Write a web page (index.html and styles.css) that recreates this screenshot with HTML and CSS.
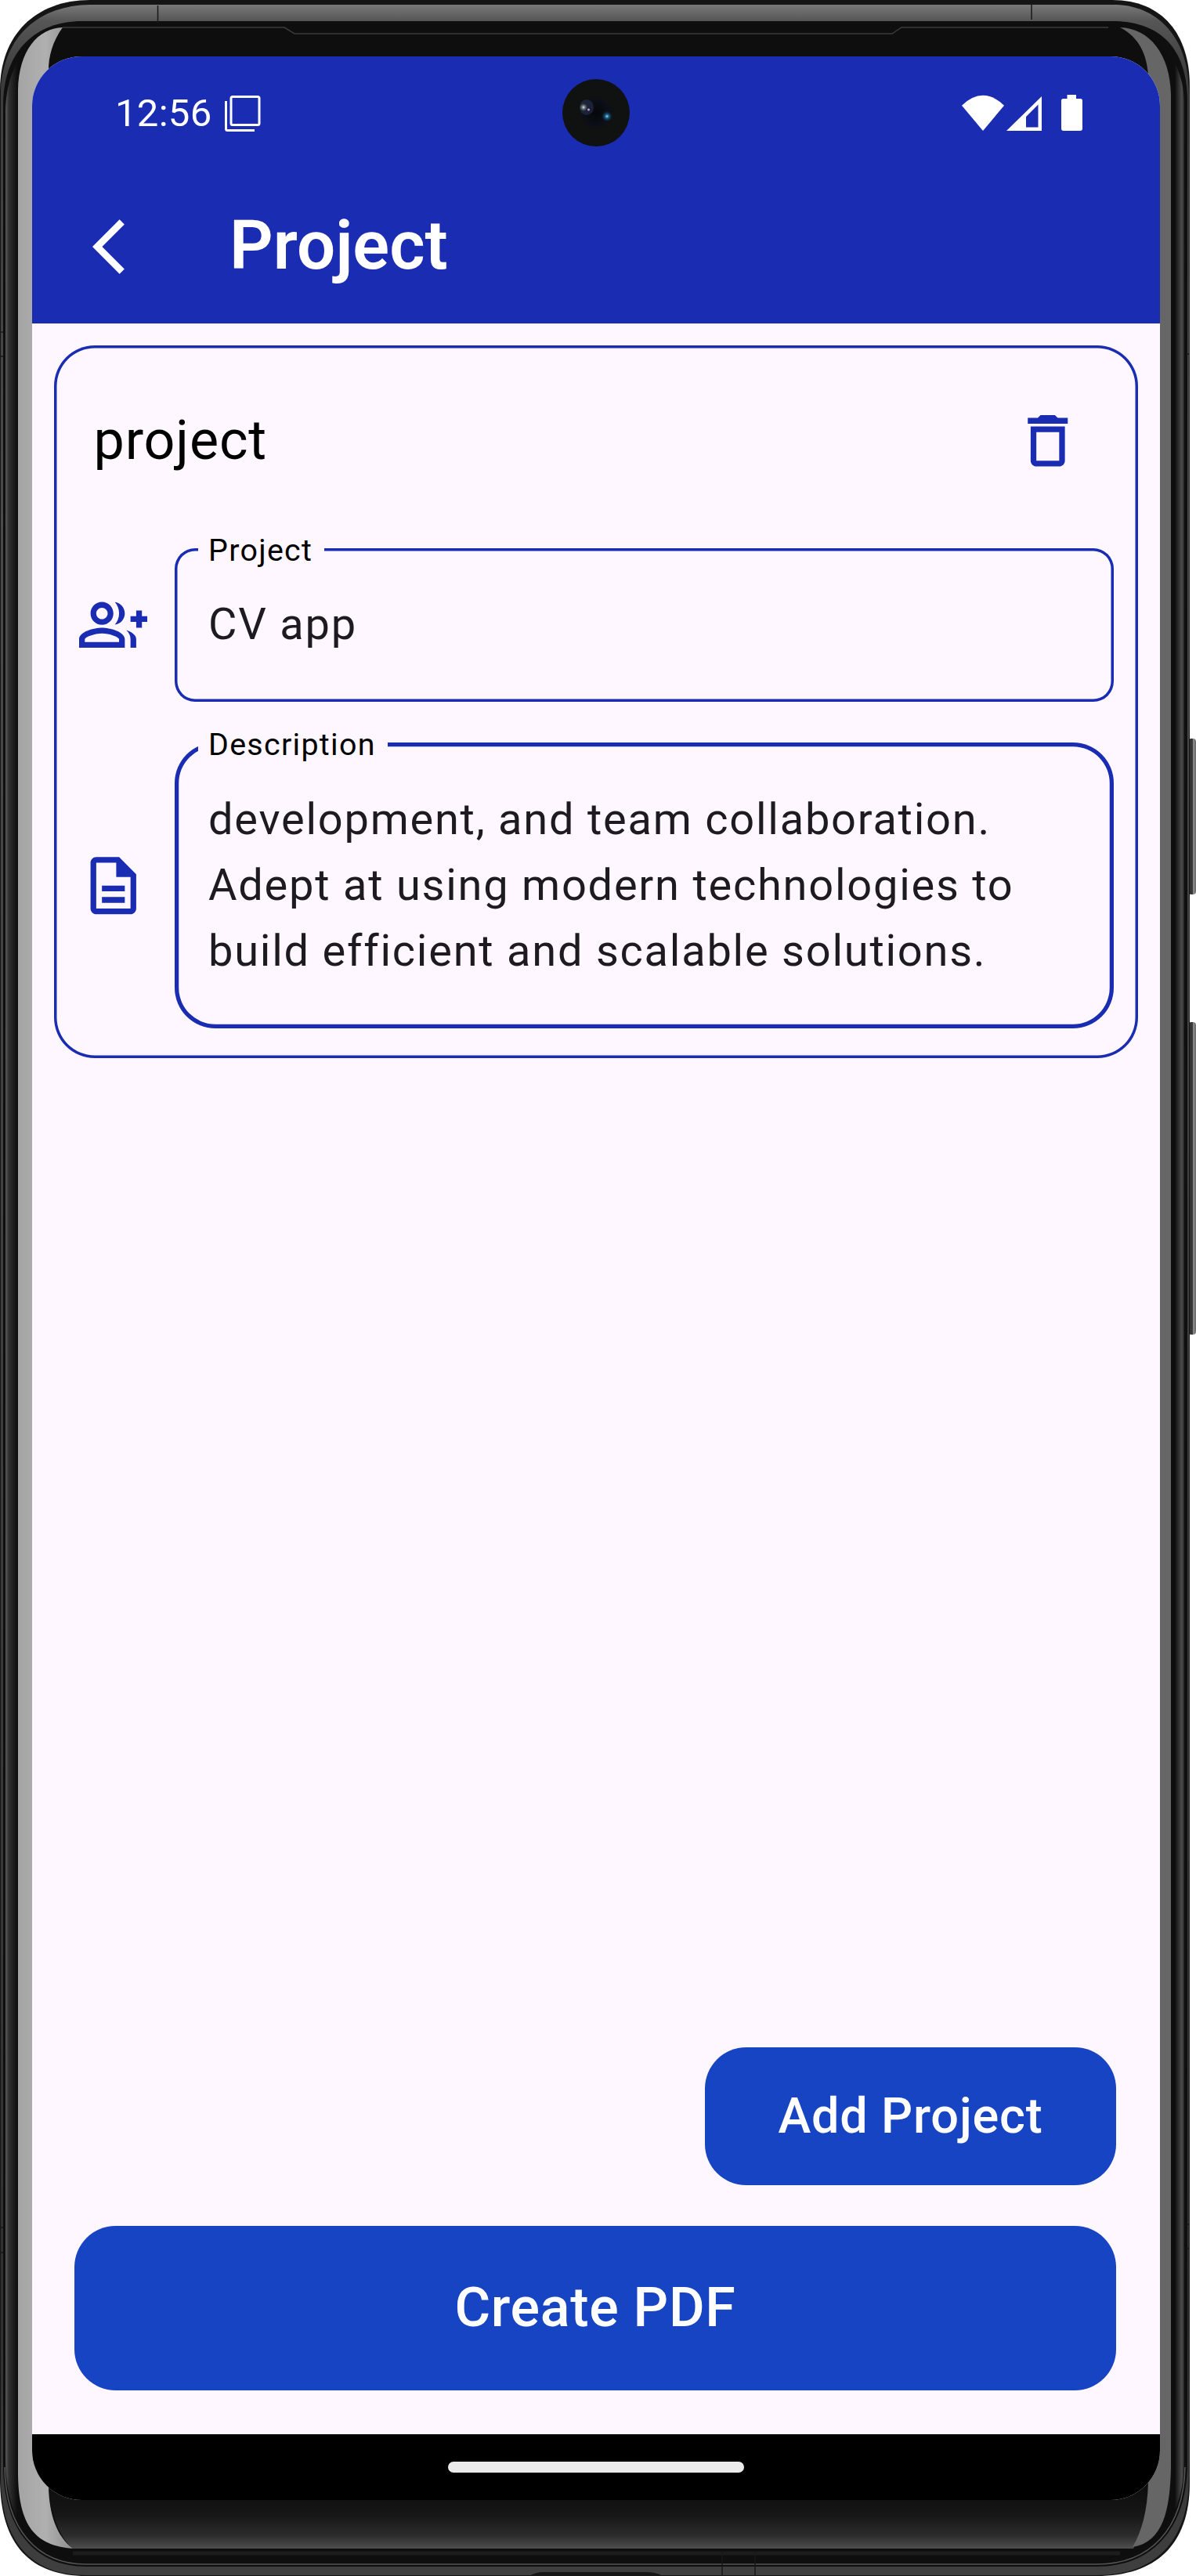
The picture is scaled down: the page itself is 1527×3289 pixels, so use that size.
FILE: index.html
```html
<!DOCTYPE html>
<html lang="en">
<head>
<meta charset="utf-8">
<title>Project</title>
<link rel="stylesheet" href="styles.css">
</head>
<body>
<div class="phone">
  <svg class="frame" viewBox="0 0 1527 3289" aria-hidden="true">
    <defs>
      <linearGradient id="rim" gradientUnits="userSpaceOnUse" x1="0" y1="0" x2="0" y2="3289">
        <stop offset="0" stop-color="#5a5a5a"/><stop offset=".002" stop-color="#787878"/><stop offset=".008" stop-color="#565656"/><stop offset=".03" stop-color="#3c3c3c"/><stop offset=".2" stop-color="#4a4a4a"/><stop offset=".9" stop-color="#303030"/><stop offset="1" stop-color="#3f3f3f"/>
      </linearGradient>
      <linearGradient id="bevel" gradientUnits="userSpaceOnUse" x1="7" y1="0" x2="1512" y2="0">
        <stop offset="0" stop-color="#5a5a5a"/><stop offset=".003" stop-color="#303030"/><stop offset=".01" stop-color="#0e0e0e"/><stop offset=".992" stop-color="#0e0e0e"/><stop offset=".998" stop-color="#4c4c4c"/><stop offset="1" stop-color="#222"/>
      </linearGradient>
      <linearGradient id="chin" x1="0" y1="0" x2="0" y2="1">
        <stop offset="0" stop-color="#0c0c0c"/><stop offset=".5" stop-color="#171717"/><stop offset=".8" stop-color="#2c2c2c"/><stop offset="1" stop-color="#4e4e4e"/>
      </linearGradient>
      <linearGradient id="shineL" x1="0" y1="0" x2="1" y2="0">
        <stop offset="0" stop-color="#a4a4a4"/><stop offset=".5" stop-color="#b0b0b0"/><stop offset="1" stop-color="#8e8e8e"/>
      </linearGradient>
      <linearGradient id="key" x1="0" y1="0" x2="1" y2="0">
        <stop offset="0" stop-color="#2b2b2b"/><stop offset=".55" stop-color="#3a3a3a"/><stop offset=".65" stop-color="#8a8a8a"/><stop offset="1" stop-color="#6c6c6c"/>
      </linearGradient>
    </defs>
    <rect x="1517" y="943" width="10" height="199" rx="4" fill="url(#key)"/>
    <rect x="1517" y="1305" width="10" height="399" rx="4" fill="url(#key)"/>
    <path fill="#151515" d="M0 115C0 45 45 0 115 0H1420C1485 0 1519 45 1519 110V3170C1519 3250 1475 3289 1400 3289H110C40 3289 0 3250 0 3165Z"/>
    <path fill="url(#rim)" d="M1 115C5 45 50 7 115 6H1420C1475 5 1517 45 1518 115V3165C1517 3245 1475 3288 1400 3288H110C40 3288 2 3245 1 3165Z"/>
    <path fill="#0f0f0f" d="M4 130C6 65 45 27 105 27H1420C1475 27 1514 55 1516 125V3150C1514 3230 1470 3277 1400 3277H110C45 3277 5 3230 4 3150Z"/>
    <path fill="none" stroke="#555" stroke-width="1.5" d="M6 3150C7 3230 48 3274 110 3274H1400C1468 3274 1511 3230 1513 3150"/>
    <path fill="url(#bevel)" d="M7 140C9 75 45 32 105 31H1410C1465 31 1510 65 1512 130V3145C1510 3225 1465 3270 1395 3270H110C45 3270 8 3225 7 3140Z"/>
    <path fill="none" stroke="#3b3b3b" stroke-width="1.5" d="M80 35H363L376 43H1139L1151 35H1415"/>
    <path fill="url(#chin)" d="M61 3170H1468V3180C1464 3210 1458 3234 1447 3254H93C74 3238 64 3206 61 3170Z"/>
    <path fill="none" stroke="#1c1c1c" stroke-width="5" d="M93 3260H1430"/>
    <path fill="url(#shineL)" d="M23 115C24 65 48 36 80 35C67 53 62 72 62 90V3176C63 3210 72 3238 93 3254C45 3250 24 3225 23 3160Z"/>
    <path fill="#666" d="M1495 120C1494 70 1468 36 1430 35C1455 48 1464 70 1466 95V3170C1465 3205 1458 3232 1446 3252C1485 3246 1494 3205 1495 3150Z"/>
    <g stroke="#181818" stroke-width="1.5"><path d="M201.500 7V29M1317 5V25M0 424H4M0 455H4M0 2844H4M0 2876H4M1515 452H1519M1515 2840H1519M1515 2871H1519M922 3258V3289M964 3258V3289"/></g>
    <path fill="#161616" d="M676 3289q8-5 18-5h130q14 0 22 5z"/>
  </svg>

  <main class="screen">
    <header class="top">
      <div class="status">
        <span class="time">12:56</span>
        <svg class="copy" viewBox="0 0 46 46" fill="none" stroke="#fff" stroke-width="3"><rect x="8" y="1.500" width="36" height="36" rx="2"/><path d="M1.500 7V42.500a2 2 0 0 0 2 2H38"/></svg>
        <svg class="signals" viewBox="0 0 156 47" fill="#fff"><path d="M0 13.700Q27-12 54 13.700L27 46Z"/><path fill-rule="evenodd" d="M57 46L102 2V46ZM82 28V41.500H97.500V12.500Z"/><path d="M134.500 0H146V5H151.500a2.500 2.500 0 0 1 2.500 2.500V43a3 3 0 0 1-3 3H130a3 3 0 0 1-3-3V7.500A2.500 2.500 0 0 1 129.500 5H134.500Z"/></svg>
        <svg class="camera" viewBox="0 0 86 86">
          <defs><radialGradient id="lens"><stop offset="0" stop-color="#06070a"/><stop offset=".8" stop-color="#0c0f18"/><stop offset="1" stop-color="#101111"/></radialGradient>
          <radialGradient id="glint"><stop offset="0" stop-color="#e6efe6"/><stop offset=".4" stop-color="#6d7a78"/><stop offset="1" stop-color="#6d7a78" stop-opacity="0"/></radialGradient>
          <radialGradient id="blue"><stop offset="0" stop-color="#a5dcf5"/><stop offset=".3" stop-color="#1f6a96"/><stop offset="1" stop-color="#0b2a48" stop-opacity="0"/></radialGradient></defs>
          <circle cx="43" cy="43" r="43" fill="#101211"/><circle cx="43.500" cy="43" r="21" fill="url(#lens)"/>
          <ellipse cx="31" cy="36" rx="9" ry="10" fill="#273052" opacity=".6"/><circle cx="27" cy="36" r="5" fill="url(#glint)"/><circle cx="33.500" cy="39" r="1.500" fill="#c79ad0"/><circle cx="57" cy="47.500" r="7" fill="url(#blue)"/>
        </svg>
      </div>
      <div class="appbar">
        <svg class="back" viewBox="0 0 24 24" fill="#fff"><path d="M11.670 3.870L9.900 2.100 0 12l9.900 9.900 1.770-1.770L3.540 12z"/></svg>
        <h1 class="title">Project</h1>
      </div>
    </header>

    <section class="content">
      <article class="card">
        <div class="card-head">
          <h2 class="card-title">project</h2>
          <svg class="icon" viewBox="0 0 24 24"><path d="M6 19c0 1.100.9 2 2 2h8c1.100 0 2-.9 2-2V7H6v12zM8 9h8v10H8V9zm7.500-5l-1-1h-5l-1 1H5v2h14V4h-3.500z"/></svg>
        </div>
        <div class="row">
          <svg class="icon" viewBox="0 0 24 24"><path d="M22 9V7h-2v2h-2v2h2v2h2v-2h2V9zM8 12c2.210 0 4-1.790 4-4s-1.790-4-4-4-4 1.790-4 4 1.790 4 4 4zm0-6c1.100 0 2 .9 2 2s-.9 2-2 2-2-.9-2-2 .9-2 2-2zM8 13c-2.670 0-8 1.340-8 4v3h16v-3c0-2.660-5.330-4-8-4zm6 5H2v-.990C2.200 16.290 5.300 15 8 15s5.800 1.290 6 2v1zM12.510 4.050C13.430 5.110 14 6.490 14 8s-.57 2.890-1.490 3.950C14.470 11.700 16 10.040 16 8s-1.530-3.700-3.490-3.950zM16.530 13.830C17.420 14.660 18 15.700 18 17v3h2v-3c0-1.450-1.590-2.510-3.470-3.170z"/></svg>
          <div class="field">
            <span class="label">Project</span>
            <p class="value">CV app</p>
          </div>
        </div>
        <div class="row">
          <svg class="icon" viewBox="0 0 24 24"><path d="M8 16h8v2H8zm0-4h8v2H8zm6-10H6c-1.100 0-2 .9-2 2v16c0 1.100.89 2 1.990 2H18c1.100 0 2-.9 2-2V8l-6-6zm4 18H6V4h7v5h5v11z"/></svg>
          <div class="field focused">
            <span class="label">Description</span>
            <p class="value">development, and team collaboration.<br>Adept at using modern technologies to<br>build efficient and scalable solutions.</p>
          </div>
        </div>
      </article>
      <div class="actions">
        <button class="btn add">Add Project</button>
        <button class="btn create">Create PDF</button>
      </div>
    </section>
    <footer class="nav"><div class="handle"></div></footer>
  </main>
</div>
</body>
</html>
```
FILE: styles.css
```css
* { box-sizing: border-box; }
body {
  margin: 0;
  background: #fff;
  font-family: Roboto, "Liberation Sans", sans-serif;
}
h1, h2, p { margin: 0; font-weight: 400; }
svg { display: block; flex: none; }

.phone {
  position: relative;
  width: 1527px;
  height: 3289px;
  padding: 72px 46px 97px 41px;
  overflow: hidden;
}
.frame { position: absolute; top: 0; left: 0; width: 1527px; height: 3289px; }

.screen {
  position: relative;
  display: flex;
  flex-direction: column;
  height: 3120px;
  border-radius: 63px;
  overflow: hidden;
  background: #fef7ff;
}

.top { background: #1a2db2; color: #fff; height: 341px; }
.status {
  position: relative;
  display: flex;
  align-items: center;
  height: 145px;
  padding: 0 97px 0 106px;
}
.time { font-size: 49px; line-height: 58px; width: 140px; letter-spacing: 0.3px; }
.copy { width: 46px; height: 46px; }
.signals { width: 156px; height: 47px; margin-left: auto; }
.camera { position: absolute; left: 677px; top: 29px; width: 86px; height: 86px; }

.appbar { display: flex; align-items: center; height: 196px; padding-left: 77px; }
.back { width: 84px; height: 84px; margin-right: 91px; }
.title { font-size: 87px; font-weight: 600; line-height: 100px; padding-bottom: 4px; }

.content {
  display: flex;
  flex-direction: column;
  justify-content: space-between;
  flex: 1;
  padding: 28px 28px 56px;
}
.card {
  display: flex;
  flex-direction: column;
  gap: 52px;
  height: 910px;
  padding: 0 31.5px;
  border-radius: 52px;
  box-shadow: inset 0 0 0 3.5px #1a2db2;
}
.card-head {
  display: flex;
  align-items: center;
  justify-content: space-between;
  height: 207px;
  padding: 36px 40px 0 19px;
  flex: none;
}
.card-title { font-size: 70px; line-height: 82px; letter-spacing: 0.85px; color: #000; padding-bottom: 2px; }
.icon { width: 87.5px; height: 87.5px; fill: #1a2db2; }

.row { display: flex; align-items: center; gap: 35px; }
.field {
  position: relative;
  flex: 1;
  height: 196px;
  padding: 55px 42px 56px 43px;
  border-radius: 26px;
  box-shadow: inset 0 0 0 3.5px #1a2db2;
}
.field.focused {
  height: 365px;
  padding-top: 56px;
  border-radius: 52px;
  box-shadow: inset 0 0 0 5.25px #1a2db2;
}
.label {
  position: absolute;
  left: 30px;
  top: -21px;
  padding: 0 15px 0 13px;
  background: #fef7ff;
  color: #000;
  font-size: 39.4px;
  line-height: 48px;
  letter-spacing: 1.3px;
}
.value {
  font-size: 56px;
  line-height: 84px;
  letter-spacing: 1.75px;
  color: #1d1b20;
  white-space: nowrap;
}

.actions {
  display: flex;
  flex-direction: column;
  align-items: flex-end;
  gap: 52px;
  padding: 0 28px 0 26px;
}
.btn {
  border: 0;
  border-radius: 52.5px;
  background: #1744c2;
  color: #fff;
  font-family: inherit;
  font-weight: 500;
  padding: 0 0 2px;
}
.add { width: 525px; height: 176px; font-size: 63px; letter-spacing: 0.8px; }
.create { width: 100%; height: 210px; font-size: 70px; letter-spacing: 0.7px; }

.nav {
  display: flex;
  align-items: center;
  justify-content: center;
  height: 84px;
  background: #000;
}
.handle { width: 378px; height: 14px; border-radius: 7px; background: #ebebeb; }
```
